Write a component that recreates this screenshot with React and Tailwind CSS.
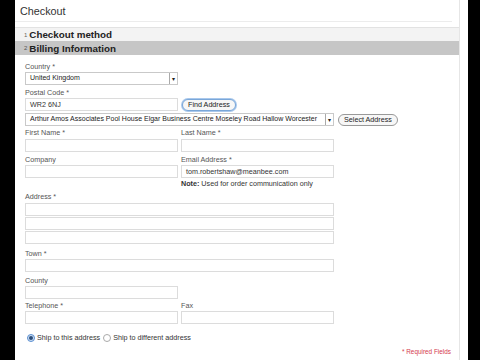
import React from "react";

const font = { fontFamily: '"Liberation Sans", Arial, sans-serif' };

function Label({ children, req }) {
  return (
    <div className="text-[7.2px] leading-[10px] text-[#555] h-[10px] whitespace-nowrap">
      {children}
      {req && <span> *</span>}
    </div>
  );
}

function Input({ w = "w-[153px]", value }) {
  return (
    <div className={`${w} h-[13px] border border-[#dcdcdc] bg-white text-[7.2px] leading-[11px] pl-[4px] text-[#333] whitespace-nowrap`}>
      {value}
    </div>
  );
}

function Select({ w, value }) {
  return (
    <div className={`${w} h-[13px] border border-[#c9c9c9] bg-white flex items-center text-[7px] text-[#222]`}>
      <span className="flex-1 pl-[4px] overflow-hidden whitespace-nowrap">{value}</span>
      <span className="w-[8px] h-[11px] border-l border-[#aaa] flex items-center justify-center text-[6px] leading-none">▾</span>
    </div>
  );
}

function Pill({ children, focus }) {
  return (
    <div
      className={`h-[12px] px-[5px] rounded-full border bg-[#f7f7f7] text-[7.2px] leading-[10px] text-[#222] whitespace-nowrap ${
        focus ? "border-[#7aa7d9] ring-1 ring-[#a9c8ec]" : "border-[#999]"
      }`}
    >
      {children}
    </div>
  );
}

export default function App() {
  return (
    <div className="w-[480px] h-[360px] bg-black flex overflow-hidden" style={font}>
      <div className="w-[15px] shrink-0" />
      <div className="w-[453px] shrink-0 bg-white flex">
        <div className="w-[445px] flex flex-col border-r border-[#e6e6e6]">
          <div className="h-[22px] pl-[5px] pt-[5px] text-[10.8px] leading-[13px] text-[#333] border-b border-[#ececec] mr-[7px]">
            Checkout
          </div>
          <div className="mt-[5px] h-[14px] bg-[#f3f3f3] border-t border-[#e2e2e2] flex items-center pl-[9px]">
            <span className="text-[6px] text-[#666] mr-[2px] mt-[1px]">1</span>
            <span className="text-[9.8px] leading-[11px] font-bold text-[#222]">Checkout method</span>
          </div>
          <div className="h-[14px] bg-[#c6c6c6] flex items-center pl-[9px]">
            <span className="text-[6px] text-[#555] mr-[2px] mt-[1px]">2</span>
            <span className="text-[9.8px] leading-[11px] font-bold text-[#222]">Billing Information</span>
          </div>
          <div className="pl-[10px] pt-[7px] flex flex-col">
            <Label req>Country</Label>
            <Select w="w-[153px]" value="United Kingdom" />
            <div className="mt-[3px]">
              <Label req>Postal Code</Label>
            </div>
            <div className="flex items-center gap-[4px]">
              <Input value="WR2 6NJ" />
              <Pill focus>Find Address</Pill>
            </div>
            <div className="mt-[2px] flex items-center gap-[4px]">
              <Select w="w-[309px]" value="Arthur Amos Associates Pool House Elgar Business Centre Moseley Road Hallow Worcester" />
              <Pill>Select Address</Pill>
            </div>
            <div className="mt-[2px] flex gap-[3px]">
              <div className="flex flex-col gap-[1px]">
                <Label req>First Name</Label>
                <Input />
              </div>
              <div className="flex flex-col gap-[1px]">
                <Label req>Last Name</Label>
                <Input />
              </div>
            </div>
            <div className="mt-[3px] flex gap-[3px]">
              <div className="flex flex-col">
                <Label>Company</Label>
                <Input />
              </div>
              <div className="flex flex-col">
                <Label req>Email Address</Label>
                <Input value="tom.robertshaw@meanbee.com" />
                <div className="text-[7.2px] leading-[11px] text-[#333]">
                  <span className="font-bold">Note:</span> Used for order communication only
                </div>
              </div>
            </div>
            <div className="mt-[3px]">
              <Label req>Address</Label>
            </div>
            <div className="mt-[1px] flex flex-col gap-[1px]">
              <Input w="w-[309px]" />
              <Input w="w-[309px]" />
              <Input w="w-[309px]" />
            </div>
            <div className="mt-[5px]">
              <Label req>Town</Label>
            </div>
            <Input w="w-[309px]" />
            <div className="mt-[4px]">
              <Label>County</Label>
            </div>
            <Input />
            <div className="mt-[2px] flex gap-[3px]">
              <div className="flex flex-col">
                <Label req>Telephone</Label>
                <Input />
              </div>
              <div className="flex flex-col">
                <Label>Fax</Label>
                <Input />
              </div>
            </div>
            <div className="mt-[9px] h-[10px] flex items-center text-[7.2px] text-[#333] leading-[10px] pl-[2px]">
              <span className="w-[8px] h-[8px] rounded-full border border-[#5b8fd0] bg-[#cfe0f5] flex items-center justify-center mr-[2px]">
                <span className="w-[4px] h-[4px] rounded-full bg-[#2b4d7a]" />
              </span>
              Ship to this address
              <span className="w-[8px] h-[8px] rounded-full border border-[#aaa] bg-white ml-[3px] mr-[2px]" />
              Ship to different address
            </div>
            <div className="mt-[4px] pr-[8px] text-right text-[6.4px] leading-[10px] text-[#d43b4e]">
              * Required Fields
            </div>
          </div>
        </div>
        <div className="flex-1" />
      </div>
      <div className="flex-1" />
    </div>
  );
}
